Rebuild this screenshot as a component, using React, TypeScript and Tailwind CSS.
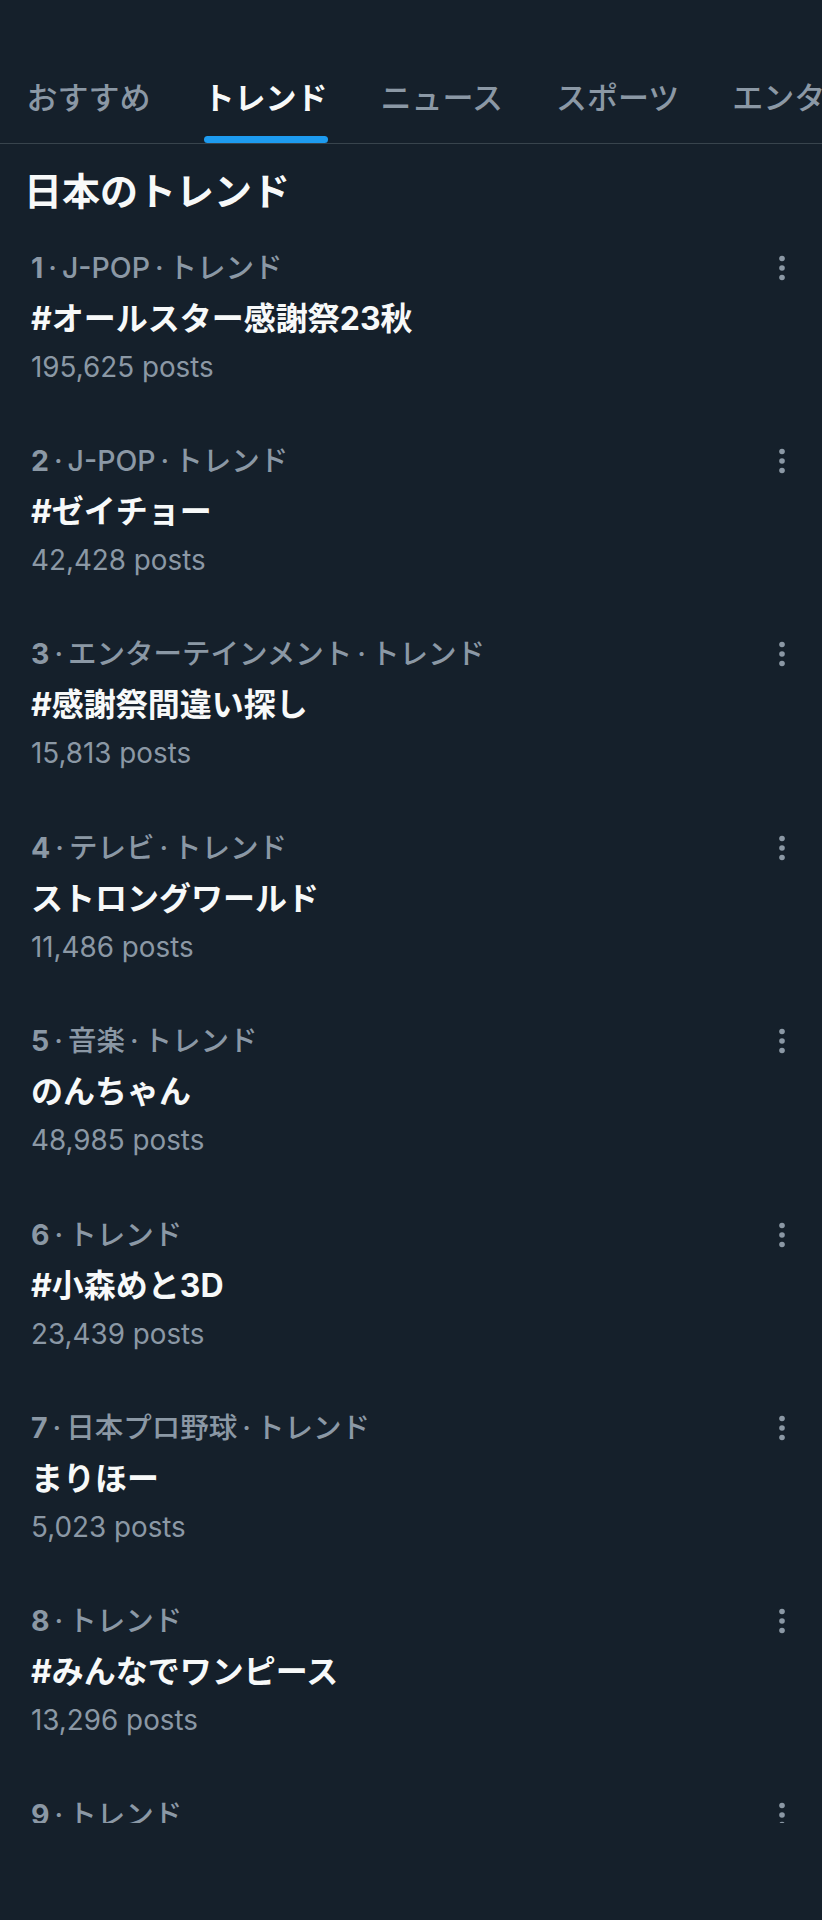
const tabs = ['おすすめ', 'トレンド', 'ニュース', 'スポーツ', 'エンターテイメント']

const trends = [
  { rank: 1, category: 'J-POP', name: '#オールスター感謝祭23秋', posts: '195,625' },
  { rank: 2, category: 'J-POP', name: '#ゼイチョー', posts: '42,428' },
  { rank: 3, category: 'エンターテインメント', name: '#感謝祭間違い探し', posts: '15,813' },
  { rank: 4, category: 'テレビ', name: 'ストロングワールド', posts: '11,486' },
  { rank: 5, category: '音楽', name: 'のんちゃん', posts: '48,985' },
  { rank: 6, category: '', name: '#小森めと3D', posts: '23,439' },
  { rank: 7, category: '日本プロ野球', name: 'まりほー', posts: '5,023' },
  { rank: 8, category: '', name: '#みんなでワンピース', posts: '13,296' },
  { rank: 9, category: '', name: '#ハロウィン', posts: '8,102' },
]

function MoreIcon() {
  return (
    <svg width="20" height="36" viewBox="0 0 20 36" className="shrink-0">
      <circle cx="10" cy="8.5" r="2.8" fill="#8b98a5" />
      <circle cx="10" cy="18" r="2.8" fill="#8b98a5" />
      <circle cx="10" cy="27.5" r="2.8" fill="#8b98a5" />
    </svg>
  )
}

function Dot() {
  return <span className="mx-[5px]">·</span>
}

export default function App() {
  return (
    <div
      className="h-[1920px] w-[822px] bg-[#15202b] text-[#f7f9f9]"
      style={{ fontFamily: 'Inter, "Noto Sans CJK JP", sans-serif' }}
    >
      <div className="h-[1823px] overflow-hidden">
        <div className="h-[54px]" />

        {/* Tabs */}
        <div className="flex h-[90px] overflow-hidden whitespace-nowrap border-b border-[#38444d]">
          {tabs.map((tab, i) => (
            <div key={tab} className="relative flex shrink-0 items-center px-[26.5px] pb-[1px]">
              <span
                className={
                  i === 1
                    ? 'text-[31px] font-bold text-[#f7f9f9]'
                    : 'text-[31px] font-medium text-[#8b98a5]'
                }
              >
                {tab}
              </span>
              {i === 1 && (
                <span className="absolute bottom-0 left-[26.5px] right-[26.5px] h-[7px] rounded-full bg-[#1d9bf0]" />
              )}
            </div>
          ))}
        </div>

        {/* Heading */}
        <h1 className="px-[24px] pt-[25px] pb-[8.5px] text-[38px] font-bold leading-[44px]">
          日本のトレンド
        </h1>

        {/* Trends */}
        <div>
          {trends.map((t) => (
            <div key={t.rank} className="flex justify-between py-[28.2px] pl-[31px] pr-[30px]">
              <div>
                <div className="text-[28.5px] font-medium leading-[36px] text-[#8b98a5]">
                  <span className="font-bold">{t.rank}</span>
                  <Dot />
                  {t.category && (
                    <>
                      {t.category}
                      <Dot />
                    </>
                  )}
                  トレンド
                </div>
                <div className="mt-[11px] text-[32px] font-bold leading-[44px] text-[#f7f9f9]">
                  {t.name}
                </div>
                <div className="mt-[6px] text-[27.8px] leading-[40px] text-[#8b98a5]">
                  {t.posts} posts
                </div>
              </div>
              <MoreIcon />
            </div>
          ))}
        </div>
      </div>
    </div>
  )
}
